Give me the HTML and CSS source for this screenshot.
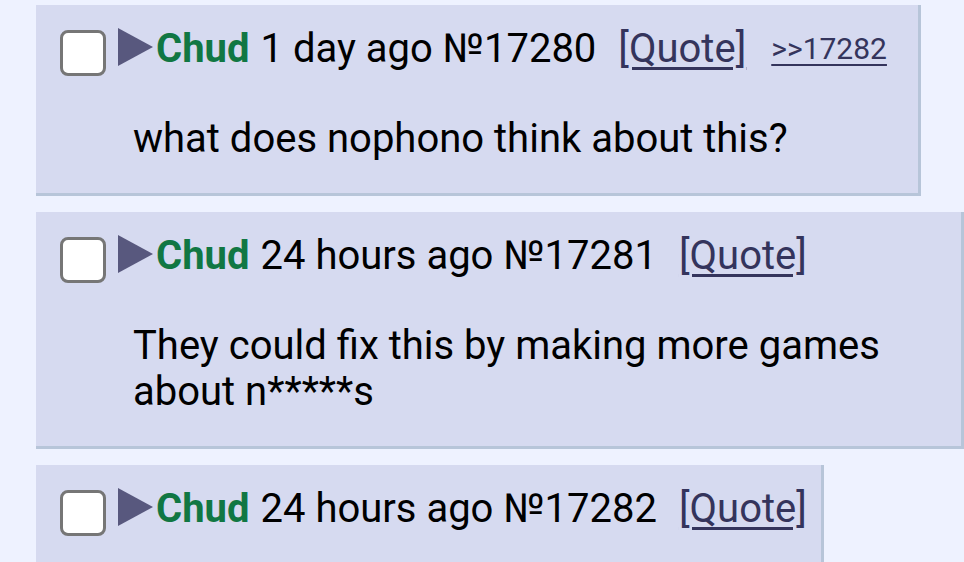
FILE: index.html
```html
<!DOCTYPE html>
<html>
  <head>
    <title>Thread</title>
    <link rel="stylesheet" href="styles.css">
  </head>
  <body>
    <div class="thread">
      <div class="post">
        <div class="post-info">
          <span class="check"></span>
          <span class="toggle"></span>
          <span class="name">Chud</span>
          <span class="date">1 day ago</span>
          <span class="num">№17280</span>
          <a class="quote" href="#">[Quote]</a>
          <a class="backlink" href="#">&gt;&gt;17282</a>
        </div>
        <div class="message">what does nophono think about this?</div>
      </div>

      <div class="post wide">
        <div class="post-info">
          <span class="check"></span>
          <span class="toggle"></span>
          <span class="name">Chud</span>
          <span class="date">24 hours ago</span>
          <span class="num">№17281</span>
          <a class="quote" href="#">[Quote]</a>
        </div>
        <div class="message">They could fix this by making more games about n*****s</div>
      </div>

      <div class="post">
        <div class="post-info">
          <span class="check"></span>
          <span class="toggle"></span>
          <span class="name">Chud</span>
          <span class="date">24 hours ago</span>
          <span class="num">№17282</span>
          <a class="quote" href="#">[Quote]</a>
        </div>
        <div class="message">&nbsp;</div>
      </div>
    </div>
  </body>
</html>
```

FILE: styles.css
```css
body {
  margin: 0;
  background: #eef2ff;
  font-family: Roboto, "Liberation Sans", sans-serif;
  color: #000;
  overflow: hidden;
}

.thread {
  display: flex;
  flex-direction: column;
  align-items: flex-start;
  gap: 16px;
  padding: 5px 0 0 36px;
}

.post {
  background: #d6daf0;
  border-right: 3px solid #b7c5d9;
  border-bottom: 3px solid #b7c5d9;
  padding: 25px 14px 31px 24px;
  max-width: calc(100vw - 36px);
  box-sizing: border-box;
}

.post.wide {
  width: calc(100vw - 36px);
  padding-right: 31px;
}

/* header row: checkbox, toggle arrow, name, date, number, links */
.post-info {
  display: flex;
  align-items: flex-start;
  font-size: 40px;
  line-height: 38px;
  white-space: nowrap;
}

.check {
  width: 40px;
  height: 40px;
  background: #fff;
  border: 3px solid #767676;
  border-radius: 8px;
  margin-right: 12px;
}

.toggle {
  width: 0;
  height: 0;
  margin-top: -2px;
  border-top: 19px solid transparent;
  border-bottom: 19px solid transparent;
  border-left: 35px solid #58587e;
  margin-right: 3px;
}

.name {
  color: #117743;
  font-weight: bold;
  margin-right: 11px;
}

.date {
  margin-right: 10px;
}

.num {
  margin-right: 22px;
}

.quote,
.backlink {
  color: #34345c;
  text-decoration: underline;
  text-decoration-thickness: 3px;
  text-underline-offset: 5px;
}

.backlink {
  font-size: 30px;
  margin-left: 25px;
  margin-right: 17px;
  text-decoration-thickness: 2px;
}

.message {
  margin: 40px 0 0 73px;
  font-size: 40px;
  line-height: 46px;
}
```
